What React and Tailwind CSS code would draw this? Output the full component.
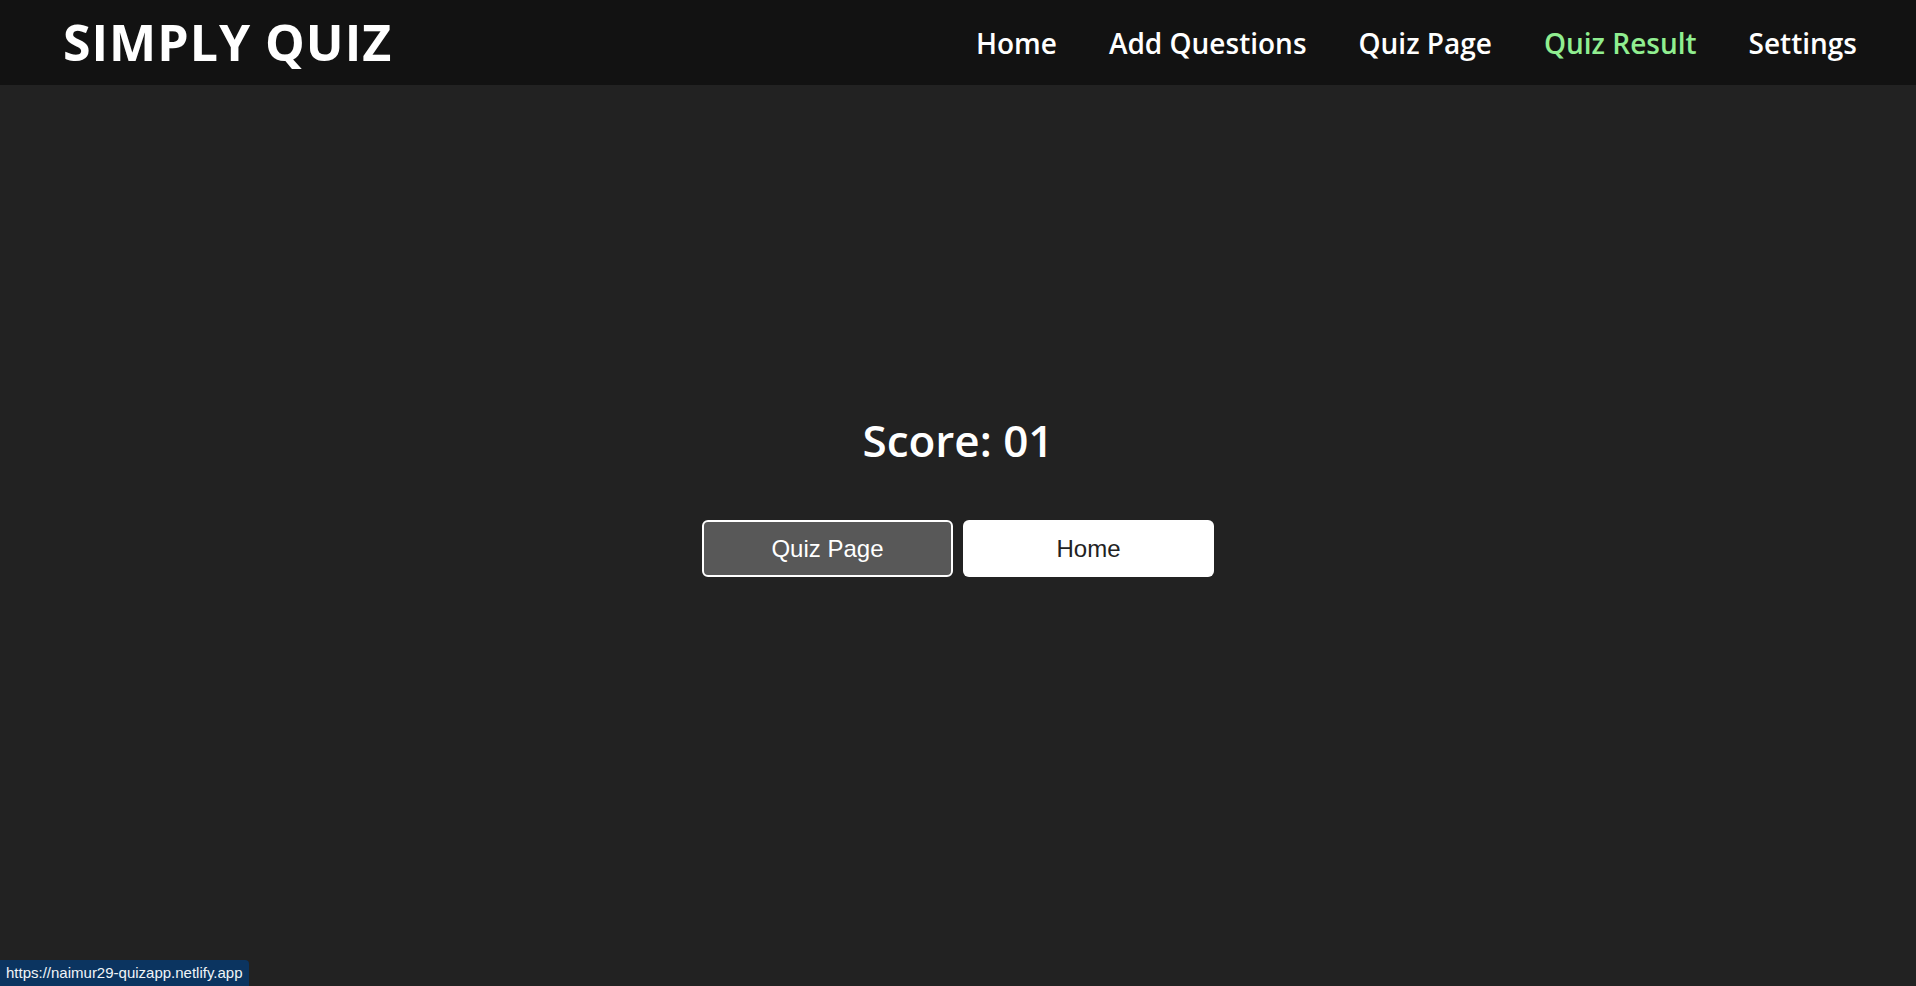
const links = ["Home", "Add Questions", "Quiz Page", "Quiz Result", "Settings"];

export default function App() {
  return (
    <div className="min-h-screen bg-[#222222] relative" style={{ fontFamily: "'Open Sans', sans-serif" }}>
      <header className="h-[85px] bg-[#121212] flex items-center justify-between pl-[63px] pr-[59px]">
        <h1 className="text-white text-[50px] font-bold tracking-[1px]">SIMPLY QUIZ</h1>
        <nav className="flex gap-[52px]">
          {links.map((l) => (
            <a
              key={l}
              href="#"
              className={`text-[28px] font-semibold ${l === "Quiz Result" ? "text-[#90ee90]" : "text-white"}`}
            >
              {l}
            </a>
          ))}
        </nav>
      </header>

      <main className="flex flex-col items-center pt-[322px]">
        <h2 className="text-white text-[44px] font-semibold">Score: 01</h2>
        <div className="flex gap-[10px] mt-[47px]" style={{ fontFamily: "'Liberation Sans', Arial, sans-serif" }}>
          <button className="w-[251px] h-[57px] bg-[#585858] border-2 border-white rounded-md text-white text-[24px]">
            Quiz Page
          </button>
          <button className="w-[251px] h-[57px] bg-white rounded-md text-[#222] text-[24px]">Home</button>
        </div>
      </main>

      <div
        className="absolute left-0 bottom-0 h-[26px] bg-[#0b3460] text-[#f0f4f8] text-[15px] px-[6px] flex items-center rounded-tr-[4px]"
        style={{ fontFamily: "'Liberation Sans', Arial, sans-serif" }}
      >
        https://naimur29-quizapp.netlify.app
      </div>
    </div>
  );
}
